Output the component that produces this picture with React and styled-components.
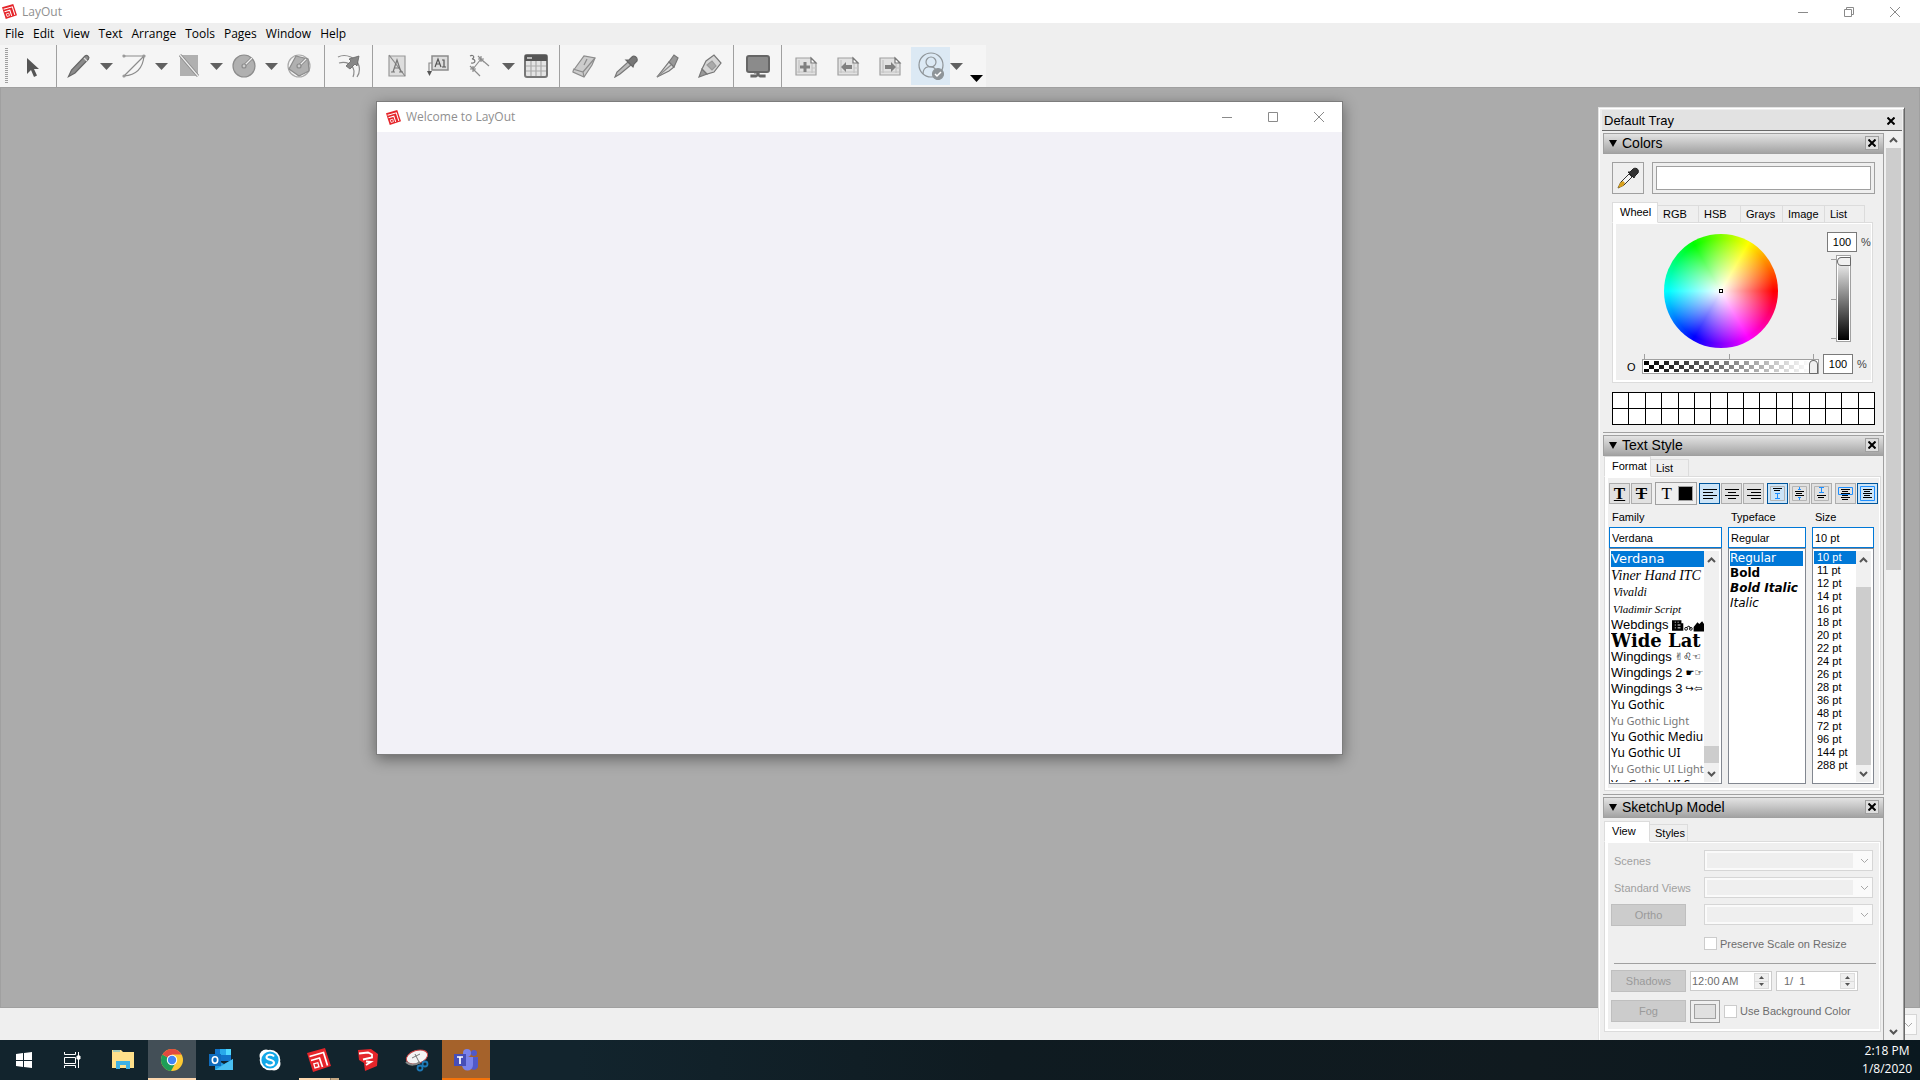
import React from "react";
import styled, { createGlobalStyle, css } from "styled-components";

const ui = `"Open Sans", "Noto Sans", sans-serif`;
const sans = `"Liberation Sans", Arial, sans-serif`;

const GlobalStyle = createGlobalStyle`
  *, *::before, *::after { box-sizing: border-box; }
  body { margin: 0; background: #ababab; overflow: hidden; }
  button, input, select { font: inherit; color: inherit; margin: 0; padding: 0; border: 0; border-radius: 0; background: none; outline: 0; }
  svg { display: block; flex: none; }
  ul { list-style: none; margin: 0; padding: 0; }
`;

/* ---------- application shell ---------- */

const Screen = styled.div`
  position: relative;
  display: flex;
  flex-direction: column;
  height: 100vh;
  font: 12px/16px ${ui};
  color: #000;
`;

const TitleBar = styled.header`
  display: flex;
  align-items: center;
  flex: none;
  height: ${(p) => p.$height}px;
  padding-left: ${(p) => p.$lead}px;
  padding-right: ${(p) => p.$trail}px;
  gap: 5px;
  background: #fff;
  color: #8f8f8f;
`;

const TitleText = styled.span`
  flex: 1;
`;

const WindowButton = styled.button`
  display: grid;
  place-items: center;
  width: 46px;
  height: 100%;
`;

const MenuBar = styled.nav`
  display: flex;
  flex: none;
  align-items: center;
  gap: 9px;
  height: 22px;
  padding-left: 5px;
  background: #efefef;
`;

const MenuItem = styled.button`
  line-height: 22px;
`;

const ToolStrip = styled.div`
  flex: none;
  display: flex;
  height: 43px;
  background: #efefef;
  border-bottom: 1px solid #a0a0a0;
`;

const Tools = styled.div`
  display: flex;
  padding-right: 3px;
  background: #f5f5f5;
`;

const Grip = styled.div`
  width: 3px;
  margin: 3px 1px 4px 5px;
  background: repeating-linear-gradient(#a0a0a0 0 1px, transparent 1px 2px);
`;

const ToolGroup = styled.div`
  display: flex;
  align-items: center;
  padding: 0 ${(p) => (p.$early ? 4 : 2)}px 0 ${(p) => (p.$early ? 1 : 3)}px;
  border-right: ${(p) => (p.$last ? 0 : "1px solid #a0a0a0")};
`;

const ToolButton = styled.button`
  display: grid;
  place-items: center;
  width: ${(p) => (p.$active ? 39 : 42)}px;
  height: 38px;
  background: ${(p) => (p.$active ? "#dce9f4" : "transparent")};
`;

const CaretButton = styled.button`
  display: grid;
  place-items: center;
  width: 13px;
  height: 38px;
`;

const OverflowButton = styled.button`
  align-self: flex-end;
  padding: 0 0 5px 5px;
`;

const Canvas = styled.main`
  flex: 1;
  background: #ababab;
  border: solid #a0a0a0;
  border-width: 0 1px 1px;
`;

const StatusBar = styled.footer`
  flex: none;
  display: flex;
  align-items: center;
  justify-content: flex-end;
  height: 32px;
  padding-right: 3px;
  background: #efefef;
`;

const Welcome = styled.section`
  position: absolute;
  left: 376px;
  top: 101px;
  width: 967px;
  height: 654px;
  background: #f2f1f7;
  border: 1px solid #7d7d7d;
  box-shadow: 0 4px 14px rgba(0, 0, 0, 0.42);
`;

/* ---------- tray ---------- */

const Tray = styled.aside`
  position: absolute;
  top: 107px;
  right: 15px;
  bottom: 40px;
  width: 307px;
  display: flex;
  flex-direction: column;
  padding: 2px 2px 0 3px;
  background: #efefef;
  border: 1px solid #e3e3e3;
  border-right-color: #696969;
  border-bottom: 0;
  box-shadow: inset 1px 1px #fff, inset -1px 0 #a0a0a0;
  font: 11px/14px ${sans};
  overflow: hidden;
`;

const TrayTitle = styled.header`
  display: flex;
  align-items: center;
  justify-content: space-between;
  flex: none;
  height: 21px;
  padding: 1px 7px 0 2px;
  background: #e2e2e2;
  border-bottom: 1px solid #696969;
  font-size: 13px;
`;

const TrayBody = styled.div`
  display: flex;
  flex: 1;
  gap: 2px;
  min-height: 0;
  padding: 0 1px;
`;

const Panels = styled.div`
  flex: 1;
  min-width: 0;
  display: flex;
  flex-direction: column;
  gap: 2px;
  padding-top: 2px;
`;

const PanelBox = styled.section`
  flex: none;
  border-right: 1px solid #a0a0a0;
  border-bottom: 1px solid #a0a0a0;
`;

const PanelHead = styled.header`
  display: flex;
  align-items: center;
  height: 21px;
  padding: 0 4px 1px 5px;
  gap: 5px;
  border: 1px solid #a0a0a0;
  border-right: 0;
  background: linear-gradient(#e3e3e3, #a3a3a3);
  font-size: 14px;
`;

const PanelTitle = styled.h2`
  flex: 1;
  margin: 0;
  font: inherit;
`;

const CloseBox = styled.button`
  display: grid;
  place-items: center;
  width: 14px;
  height: 14px;
  border: 1px solid #a0a0a0;
  background: #dedede;
`;

const CloseBoxPlain = styled.button`
  display: grid;
  place-items: center;
`;

const ScrollColumn = styled.div`
  display: flex;
  flex-direction: column;
  align-items: center;
  justify-content: space-between;
  flex: none;
  width: 15px;
  background: #f0f0f0;
`;

const ScrollArrow = styled.button`
  display: grid;
  place-items: center;
  flex: none;
  width: 15px;
  height: 17px;
`;

const ScrollTrack = styled.div`
  flex: 1;
  display: flex;
  flex-direction: column;
  width: 15px;
  padding-bottom: ${(p) => p.$rest || 0}px;
`;

const Thumb = styled.div`
  width: 15px;
  height: ${(p) => p.$size};
  margin-top: ${(p) => (p.$end ? "auto" : 0)};
  background: #cdcdcd;
`;

const Tabs = styled.div`
  display: flex;
  align-items: flex-end;
  height: 21px;
  margin-bottom: -1px;
`;

const Tab = styled.button`
  width: ${(p) => p.$w}px;
  height: 18px;
  text-align: left;
  padding-left: 5px;
  border: 1px solid #dcdcdc;
  border-left: 0;
  white-space: nowrap;
  ${(p) =>
    p.$on &&
    css`
      position: relative;
      height: 21px;
      padding: 0 0 2px 7px;
      border-left: 1px solid #dcdcdc;
      border-bottom-color: #fff;
      background: #fff;
    `}
`;

const TabPane = styled.div`
  border: 1px solid #dcdcdc;
  box-shadow: inset 3px 1px #fff, inset -1px -2px #fff;
`;

/* Colors */

const ColorsBody = styled.div`
  padding: 8px 8px 7px 9px;
`;

const SampleRow = styled.div`
  display: flex;
  gap: 8px;
  height: 32px;
  margin-bottom: 8px;
`;

const Dropper = styled.button`
  display: grid;
  place-items: center;
  width: 32px;
  border: 1px solid #a0a0a0;
`;

const Well = styled.button`
  flex: 1;
  padding: 3px;
  border: 1px solid #a0a0a0;
`;

const WellFill = styled.span`
  display: block;
  height: 100%;
  border: 1px solid #a0a0a0;
  background: ${(p) => p.$fill};
`;

const WheelPane = styled(TabPane)`
  height: 161px;
  margin-right: 2px;
  padding: 9px 0 0 14px;
`;

const WheelRow = styled.div`
  display: flex;
  height: 122px;
`;

const Wheel = styled.div`
  display: grid;
  place-items: center;
  width: 114px;
  height: 114px;
  margin: 2px 49px 0 37px;
  border-radius: 50%;
  background: radial-gradient(closest-side, #fff 0, rgba(255, 255, 255, 0.5) 45%, rgba(255, 255, 255, 0) 92%),
    conic-gradient(from 90deg, #f00, #f0f, #00f, #0ff, #0f0, #ff0, #f00);
`;

const Marker = styled.span`
  width: 4px;
  height: 4px;
  border: 1px solid #000;
  background: #fff;
`;

const Amount = styled.label`
  display: flex;
  align-items: center;
  gap: 4px;
  height: 20px;
  color: #444;
`;

const AmountInput = styled.input`
  width: 30px;
  height: 20px;
  border: 1px solid #7a7a7a;
  background: #fff;
  color: #000;
  text-align: center;
`;

const Value = styled.div`
  display: flex;
  flex-direction: column;
  gap: 3px;
`;

const ValueSlider = styled.div`
  display: flex;
  padding-left: 4px;
`;

const ValueTicks = styled.div`
  width: 5px;
  height: 80px;
  margin-top: 4px;
  background: linear-gradient(#a0a0a0, #a0a0a0) 0 0 / 5px 1px no-repeat,
    linear-gradient(#a0a0a0, #a0a0a0) 0 50% / 5px 1px no-repeat,
    linear-gradient(#a0a0a0, #a0a0a0) 0 100% / 5px 1px no-repeat;
`;

const VRange = styled.input`
  appearance: none;
  writing-mode: vertical-lr;
  direction: rtl;
  width: 15px;
  height: 87px;
  border: 1px solid #a0a0a0;
  background: linear-gradient(#fff, #000) content-box, #fff;
  padding: 1px;
  &::-webkit-slider-thumb {
    appearance: none;
    width: 14px;
    height: 9px;
    border: 1px solid #696969;
    border-radius: 5px 1px 1px 5px;
    background: #f0f0f0;
  }
`;

const OpacityRow = styled.div`
  display: flex;
  align-items: flex-end;
  gap: 4px;
`;

const OpacityLabel = styled.label`
  width: 11px;
`;

const OpacitySlider = styled.div`
  width: 177px;
`;

const OpacityTicks = styled.div`
  height: 5px;
  margin: 0 5px 0 2px;
  background: linear-gradient(#a0a0a0, #a0a0a0) 0 0 / 1px 5px no-repeat,
    linear-gradient(#a0a0a0, #a0a0a0) 50% 0 / 1px 5px no-repeat,
    linear-gradient(#a0a0a0, #a0a0a0) 100% 0 / 1px 5px no-repeat;
`;

const HRange = styled.input`
  appearance: none;
  display: block;
  width: 100%;
  height: 15px;
  border: 1px solid #a0a0a0;
  padding: 1px 0 1px 1px;
  background: linear-gradient(90deg, rgba(255, 255, 255, 0), #fff 96%) content-box,
    repeating-conic-gradient(#fff 0 25%, #000 0 50%) 0 0 / 10px 8px content-box, #fff;
  &::-webkit-slider-thumb {
    appearance: none;
    width: 9px;
    height: 14px;
    border: 1px solid #696969;
    border-radius: 5px 5px 1px 1px;
    background: #f0f0f0;
  }
`;

const SwatchGrid = styled.div`
  display: grid;
  grid-template-columns: repeat(16, 1fr);
  grid-auto-rows: 15px;
  gap: 1px;
  margin-top: 9px;
  border: 1px solid #000;
  background: #000;
`;

const Swatch = styled.button`
  background: #fff;
`;

/* Text style */

const StyleBody = styled.div`
  padding: 0 2px 3px 1px;
`;

const FormatPane = styled(TabPane)`
  padding: 5px 1px 6px 4px;
`;

const FormatBar = styled.div`
  display: flex;
  align-items: center;
  gap: 2px;
  height: 23px;
`;

const FormatGroup = styled.div`
  display: flex;
  gap: 1px;
  padding-right: 1px;
  &:last-child { padding-right: 0; }
`;

const FormatButton = styled.button`
  display: grid;
  place-items: center;
  width: 21px;
  height: 21px;
  border: 1px solid ${(p) => (p.$on ? "#00559b" : "#adadad")};
  background: ${(p) => (p.$on ? "#cce4f7" : "#e1e1e1")};
`;

const Glyph = styled.span`
  font: ${(p) => (p.$plain ? 400 : 700)} 17px/16px "Liberation Serif", serif;
  text-decoration: ${(p) => p.$line || "none"};
`;

const TextColor = styled.button`
  display: flex;
  align-items: center;
  justify-content: flex-end;
  gap: 6px;
  width: 42px;
  height: 23px;
  padding-right: 3px;
  border: 1px solid #a0a0a0;
`;

const Chip = styled.span`
  width: 15px;
  height: 15px;
  border: 1px solid #a0a0a0;
  background: #000;
`;

const PickerRow = styled.div`
  display: flex;
  gap: 6px;
  padding-top: 5px;
`;

const Picker = styled.div`
  display: flex;
  flex-direction: column;
  width: ${(p) => p.$w}px;
`;

const PickerLabel = styled.label`
  height: 17px;
  padding-left: 3px;
`;

const PickerInput = styled.input`
  width: 100%;
  height: 21px;
  padding: 0 2px;
  border: 1px solid #0078d7;
  background: #fff;
`;

const ListBox = styled.div`
  display: flex;
  height: 236px;
  padding: 2px 2px 1px 1px;
  border: 1px solid #828790;
  background: #fff;
`;

const Options = styled.ul`
  flex: 1;
  min-width: 0;
  overflow: hidden;
`;

const Option = styled.li`
  display: flex;
  align-items: center;
  gap: 3px;
  height: ${(p) => p.$h}px;
  line-height: ${(p) => p.$h}px;
  padding-left: ${(p) => p.$indent || 0}px;
  white-space: nowrap;
  font-family: ${(p) => p.$face || sans};
  font-size: ${(p) => p.$size || 11}px;
  font-weight: ${(p) => (p.$bold ? 700 : 400)};
  font-style: ${(p) => (p.$italic ? "italic" : "normal")};
  color: ${(p) => (p.$on ? "#fff" : p.$dim ? "#777" : "#000")};
  background: ${(p) => (p.$on ? "#0078d7" : "transparent")};
`;

const Symbols = styled.span`
  font: 10px/16px "DejaVu Sans", sans-serif;
`;

/* SketchUp model */

const ModelBody = styled.div`
  padding: 3px 2px 8px 1px;
`;

const ModelPane = styled(TabPane)`
  height: 191px;
  padding: 8px 7px 0 6px;
  color: #a0a0a0;
`;

const ModelRow = styled.div`
  display: flex;
  align-items: center;
  height: 21px;
  margin-bottom: 6px;
`;

const ModelKey = styled.div`
  flex: 1;
  label { padding-left: 3px; }
`;

const FlatButton = styled.button`
  width: 75px;
  height: 22px;
  border: 1px solid #bfbfbf;
  background: #cccccc;
  color: #9a9a9a;
`;

const ComboWrap = styled.div`
  position: relative;
  width: ${(p) => p.$w}px;
  height: 21px;
`;

const Combo = styled.select`
  appearance: none;
  width: 100%;
  height: 21px;
  border: 1px solid #cccccc;
  background: linear-gradient(#efefef, #efefef) 2px 2px / calc(100% - 21px) 15px no-repeat #fff;
`;

const ComboArrow = styled.span`
  position: absolute;
  right: 4px;
  top: 8px;
  pointer-events: none;
`;

const CheckLabel = styled.label`
  display: flex;
  align-items: center;
  gap: 3px;
  height: 25px;
  padding-left: ${(p) => p.$indent || 0}px;
  color: #6d6d6d;
`;

const Check = styled.input`
  appearance: none;
  width: 13px;
  height: 13px;
  border: 1px solid #cccccc;
  background: #fff;
`;

const Rule = styled.hr`
  height: 1px;
  margin: 7px -3px 6px 3px;
  border: 0;
  background: #a0a0a0;
`;

const ControlRow = styled.div`
  display: flex;
  align-items: center;
  gap: 4px;
  height: 22px;
  margin-bottom: 8px;
`;

const Spin = styled.div`
  display: flex;
  width: 82px;
  height: 20px;
  padding: 1px 2px 1px 1px;
  border: 1px solid #cccccc;
  background: #fff;
`;

const SpinInput = styled.input`
  flex: 1;
  min-width: 0;
  padding-left: ${(p) => p.$indent || 0}px;
  color: #6d6d6d;
  white-space: pre;
`;

const SpinButtons = styled.div`
  display: grid;
  width: 15px;
  background: #efefef;
  border: 1px solid #dcdcdc;
`;

const SpinButton = styled.button`
  display: grid;
  place-items: center;
  & + & { border-top: 1px solid #dcdcdc; }
`;

const FogColor = styled.button`
  width: 30px;
  height: 23px;
  padding: 3px;
  border: 1px solid #a0a0a0;
`;

/* ---------- task bar ---------- */

const TaskBar = styled.footer`
  flex: none;
  display: flex;
  justify-content: space-between;
  height: 40px;
  background: linear-gradient(90deg, #12242d 0%, #12242d 30%, #0f1b21 52%, #101a1f 80%, #0a181f 100%);
`;

const TaskButtons = styled.div`
  display: flex;
  gap: 1px;
`;

const SystemButtons = styled.div`
  display: flex;
  padding-right: 2px;
`;

const TaskButton = styled.button`
  display: grid;
  place-items: center;
  width: 48px;
  height: 40px;
  background: ${(p) => p.$bg || "transparent"};
  box-shadow: ${(p) => (p.$bar ? `inset 0 -2px ${p.$bar}` : "none")};
`;

const RunningMark = styled(TaskButton)`
  background: linear-gradient(90deg, #fcd7ae 31px, #8c7a62 31px 32px, #c4a883 32px) 50% 100% / 40px 2px no-repeat;
`;

const Clock = styled.time`
  display: flex;
  flex-direction: column;
  align-items: center;
  justify-content: center;
  gap: 2px;
  padding: 0 8px 0 0;
  color: #fff;
`;

/* ---------- drawings ---------- */

const LayoutLogo = ({ s = 15 }) => (
  <svg width={s} height={s} viewBox="0 0 24 24">
    <path d="M0 5 18 0l6 18L6 24z" fill="#e5252a" />
    <path d="M2.500 8.500 16.500 4.500 20.500 17.500M4 12.500l8.500-2.500 3 9" fill="none" stroke="#fff" strokeWidth="1.700" />
    <path d="M6.800 15.800l4-1.100 1.200 4-4 1.200z" fill="none" stroke="#fff" strokeWidth="1.300" />
  </svg>
);

const Line = ({ d, w = 10, h = 10, c = "#8a8a8a", sw = 1 }) => (
  <svg width={w} height={h} viewBox={`0 0 ${w} ${h}`}>
    <path d={d} fill="none" stroke={c} strokeWidth={sw} />
  </svg>
);

const MinIcon = () => <Line d="M0 5.500h10" />;
const MaxIcon = () => <Line d="M.5.5h9v9h-9z" />;
const RestoreIcon = () => <Line d="M.5 2.500h7v7h-7zM2.500 2.500v-2h7v7h-2" />;
const XIcon = () => <Line d="M0 0l10 10M10 0L0 10" />;
const BoldX = ({ s = 8 }) => <Line w={s} h={s} d={`M.5.5l${s - 1} ${s - 1}M${s - 0.5}.5L.5 ${s - 0.5}`} c="#000" sw={2} />;

const Caret = ({ c = "#606060" }) => (
  <svg width="13" height="7" viewBox="0 0 13 7"><path d="M0 0h13L6.500 7z" fill={c} /></svg>
);

const Chevron = ({ up, c = "#555", sw = 2 }) => (
  <Line w={9} h={6} d={up ? "M1 5l3.500-3.500L8 5" : "M1 1l3.500 3.500L8 1"} c={c} sw={sw} />
);

const Tri = () => (
  <svg width="8" height="7" viewBox="0 0 8 7"><path d="M0 0h8L4 7z" /></svg>
);

const S = ({ children, f = "none", st = "#8c8c8c" }) => (
  <svg width="24" height="24" viewBox="0 0 24 24" fill={f} stroke={st} strokeWidth="1.200">{children}</svg>
);

const PageBase = ({ children }) => (
  <S>
    <path d="M2 4h15l5 5v12H2z" fill="#e2e2e2" stroke="#a0a0a0" />
    <path d="M5 6v13M3 18h18M18 10v9M18 14h4" stroke="#c4c4c4" />
    <path d="M17 4l5 5h-5z" fill="#fff" stroke="#777" />
    {children}
  </S>
);

const icons = {
  select: <S st="none"><path d="M8 4v16l4-4 3 7 3-1.500-3-6.500h5z" fill="#555" /></S>,
  pencil: <S><path d="M1.500 22.500l3-6.500L18 2c2-1.500 5 1 3.500 3L8 19z" fill="#8b8b8b" stroke="#666" /><path d="M17 4l3 3" stroke="#ddd" /></S>,
  arc: <S><path d="M2 2h20L2 22M22 2c-1 11-7 19-20 20" /><g fill="#999" stroke="#999"><circle cx="2" cy="2" r="1" /><circle cx="22" cy="2" r="1" /><circle cx="2" cy="22" r="1" /></g></S>,
  rect: <S><path d="M3 1h18v21H3z" fill="#b0b0b0" stroke="none" /><path d="M3 1l18 21" stroke="#8c8c8c" strokeWidth="3" /><path d="M3 1l18 21" stroke="#eee" /></S>,
  circle: <S><circle cx="12" cy="12" r="11" fill="#b0b0b0" /><path d="M12 12l8-8" stroke="#888" strokeWidth="3" /><path d="M12 12l8-8" stroke="#eee" /><circle cx="12" cy="12" r="2" fill="#ccc" /></S>,
  polygon: <S><circle cx="12" cy="12" r="11" stroke="#aaa" /><path d="M9 2l12 3 1 12-10 5L2 15z" fill="#b0b0b0" /><path d="M12 12l7-7" stroke="#888" strokeWidth="3" /><path d="M12 12l7-7" stroke="#eee" /><circle cx="12" cy="12" r="2" fill="#ccc" /></S>,
  offset: <S><path d="M1 3c8-4 19 1 21 9 1 4 0 8-2 11M2 9c7-2 14 1 15 8 0 2 0 4-1 6" /><path d="M9 12l5-5-2-2 10-3-2 10-2-2-5 5z" fill="#888" stroke="#666" strokeWidth=".8" /></S>,
  text: <S><path d="M4 2h16v20H4z" fill="#ddd" stroke="#999" /><path d="M4 1l16 21" stroke="#888" /><path d="M8 18l4-12 4 12M9 14h6M6 18h4M14 18h4" stroke="#777" /></S>,
  label: <S><path d="M5 2h16v14H5z" fill="#ddd" strokeWidth="1.500" /><path d="M8 13l3-8 3 8M9 10h4M15 6h2v7M15 13h4" stroke="#555" /><path d="M5 9H2v9" /><path d="M0 17h5l-2.500 5z" fill="#555" stroke="none" /></S>,
  dimension: <S><path d="M4 15L12 5l8 7M4 15l7 7M1 12l6 6M9 2l6 6M1 15h6M4 12v6M9 5h6M12 2v6" /><path d="M1 2c4-2 5 2 2 3 4 0 4 5-1 4" stroke="#777" /></S>,
  table: <S><rect x="1" y="1" width="22" height="22" rx="2" fill="#e4e4e4" stroke="#777" strokeWidth="2" /><path d="M1 1h22v6H1z" fill="#555" stroke="none" /><path d="M3 4h5" stroke="#fff" /><path d="M7 7v15M12 7v15M17 7v15M2 12h20M2 17h20" stroke="#aaa" /></S>,
  eraser: <S><path d="M1 17L12 2l11 2-3 7-8 12-11-5z" fill="#ccc" /><path d="M1 15l10 3L23 4M11 18l1 5M12 11l3-6" /></S>,
  dropper: <S><path d="M1 23l2-5L14 8l3 3L6 20z" fill="#bbb" stroke="#777" /><path d="M12 6l7 7 1-3 3-3c1-4-3-6-5-4l-3 3z" fill="#777" stroke="#666" /></S>,
  knife: <S><path d="M1 23L13 8l5 5-5 4z" fill="#dcdcdc" stroke="#777" /><path d="M13 8l5-7 4 3-4 9z" fill="#999" stroke="#777" /><path d="M1 23l14-12" /></S>,
  glue: <S><path d="M1 23l3-8 5 5z" fill="#999" stroke="#777" /><path d="M4 15L8 7l8-6 7 8-7 9-7 2z" fill="#d6d6d6" stroke="#777" /><path d="M9 11l5-4 4 5-4 4z" fill="#aaa" stroke="#999" /></S>,
  screen: <S><rect x="1" y="2" width="22" height="16" rx="2" fill="#8b8b8b" stroke="#666" strokeWidth="2" /><path d="M8 19h3v2H5v2h5l1-1h2l1 1h5v-2h-6v-2" fill="#666" stroke="#666" /></S>,
  add: <PageBase><path d="M6 13h10M11 8v10" stroke="#808080" strokeWidth="3" /></PageBase>,
  prev: <PageBase><path d="M5 13l5-5v3h6v4h-6v3z" fill="#808080" stroke="none" /></PageBase>,
  next: <PageBase><path d="M18 13l-5-5v3H7v4h6v3z" fill="#808080" stroke="none" /></PageBase>,
  person: (
    <svg width="28" height="28" viewBox="0 0 28 28" fill="none" stroke="#8f9599" strokeWidth="1.200">
      <circle cx="14" cy="13" r="12" /><circle cx="14" cy="10" r="5" /><path d="M6 22c0-9 10-9 13-4" />
      <circle cx="21" cy="22" r="5.500" fill="#8f9599" /><path d="M18 22l2 2 4-4" stroke="#fff" strokeWidth="1.500" />
    </svg>
  ),
};

const ColorDropper = () => (
  <svg width="24" height="24" viewBox="0 0 24 24">
    <path d="M2 22l3-6 8-8 3 3-8 8z" fill="#f5f5f5" stroke="#333" />
    <path d="M2 22l2-5 3-2 2 2-2 3z" fill="#d9a11c" />
    <path d="M12 6l6 6 1-2 3-3c2-4-3-6-5-4l-3 3z" fill="#333" stroke="#222" />
  </svg>
);

const Lines = ({ mode }) => {
  const x = { left: [0, 0, 0, 0], center: [0, 3, 0, 3], right: [0, 4, 0, 4] }[mode];
  const w = [14, mode === "center" ? 8 : 10, 14, mode === "center" ? 8 : 10];
  return (
    <svg width="14" height="10" viewBox="0 0 14 10">
      {x.map((v, i) => <rect key={i} x={v} y={i * 3} width={w[i]} height="1" />)}
    </svg>
  );
};

const Anchor = ({ mode }) => {
  const b = "#1e8fff";
  const text = (y, n = 3) => Array.from({ length: n }, (_, i) => <path key={i} d={`M${i % 2 ? 4 : 3} ${y + i * 2 + 0.5}h${i % 2 ? 6 : 9}`} stroke="#000" />);
  const frame = <path d="M.5.5h14v14H.500z" stroke="#b5b5b5" />;
  return (
    <svg width="15" height="15" viewBox="0 0 15 15" fill="none">
      {mode === "top" && <>{frame}{text(2, 2)}<path d="M7.500 7v6M5 7.500h5M5 12.500h5" stroke={b} /></>}
      {mode === "middle" && <>{frame}{text(5)}<path d="M7.500 1v3M7.500 11v3M6 3.500h3M6 11.500h3" stroke={b} /></>}
      {mode === "bottom" && <>{frame}{text(9, 2)}<path d="M7.500 1v6M5 1.500h5M5 6.500h5" stroke={b} /></>}
      {mode === "open" && <><path d="M.5 1.500h14v7H.500z" stroke={b} />{text(3, 6)}</>}
      {mode === "bound" && <><path d="M.5.5h14v14H.500z" stroke={b} />{text(3, 5)}</>}
    </svg>
  );
};

const Webdings = () => (
  <svg width="32" height="13" viewBox="0 0 34 13">
    <path d="M0 12V1h10v3h2v8z" /><path d="M3 3h1M6 3h1M3 6h1M6 6h3M3 9h1M6 9h3" stroke="#fff" />
    <circle cx="15" cy="10" r="1.500" fill="none" stroke="#000" /><circle cx="20" cy="10" r="1.500" fill="none" stroke="#000" /><path d="M15 9l3-2 2 3" fill="none" stroke="#000" />
    <path d="M23 13V8l4-5 2 2 3-3 2 3v8z" />
  </svg>
);

const taskIcons = {
  start: <svg width="16" height="16" viewBox="0 0 16 16" fill="#fff"><path d="M0 2l7-1v7H0zM8 1l8-1v8H8zM0 9h7v6l-7-1zM8 9h8v7l-8-1z" /></svg>,
  view: <svg width="17" height="16" viewBox="0 0 17 16" fill="none" stroke="#fff"><path d="M.5 0v2.500h11V0M.5 5.500h11v6H.500zM.5 16v-2.500h11V16M14.500 0v16" /><path d="M13 4h3v3h-3z" fill="#fff" /></svg>,
  files: <svg width="22" height="20" viewBox="0 0 22 20"><path d="M0 0h9l2 2h11v16H0z" fill="#ffe08a" /><path d="M1 1h7" stroke="#46b5e8" /><path d="M4 19v-8h14v8h-4v-4H8v4z" fill="#3db1e5" /></svg>,
  chrome: <svg width="22" height="22" viewBox="0 0 22 22"><circle cx="11" cy="11" r="11" fill="#fcc934" /><path d="M11 11L1.500 5.500A11 11 0 0 0 10 22l5-9z" fill="#1e9e58" /><path d="M11 11L1.500 5.500a11 11 0 0 1 19 0H11z" fill="#e24a3f" /><circle cx="11" cy="11" r="5.200" fill="#fff" /><circle cx="11" cy="11" r="4.200" fill="#4285f4" /></svg>,
  outlook: <svg width="24" height="22" viewBox="0 0 24 22"><path d="M6 0h16v12H6z" fill="#1173c9" /><path d="M11 0h6v6h-6z" fill="#28a8ea" /><path d="M17 0h5v6h-5z" fill="#50d9ff" /><path d="M6 10l9 5 9-5v11H6z" fill="#1f9ce0" /><path d="M6 21l18-11v11z" fill="#4ac0f2" /><path d="M0 5h12v12H0z" fill="#0f6cbd" /><ellipse cx="6" cy="11" rx="2.700" ry="3.200" fill="none" stroke="#fff" strokeWidth="1.600" /></svg>,
  skype: <svg width="22" height="22" viewBox="0 0 22 22"><circle cx="7" cy="7" r="6.500" fill="#fff" /><circle cx="15" cy="15" r="6.500" fill="#fff" /><circle cx="11" cy="11" r="10.300" fill="#fff" /><circle cx="11" cy="11" r="8.600" fill="#13a8e8" /><path d="M15 7.500c-2-3-8-2-7.500 1 .5 3 7 1.500 7.500 5 .3 3.500-6.500 4-8 .8" fill="none" stroke="#fff" strokeWidth="2" /></svg>,
  sketchup: <svg width="22" height="22" viewBox="0 0 22 22"><path d="M1 1l13-1 7 5-1 12L8 22 7 14 2 11z" fill="#e5252a" /><path d="M2 4.500l9-1 4 2v3L6 10.500M9 12.500l5 .5-5 3" fill="none" stroke="#fff" strokeWidth="1.800" /></svg>,
  snip: <svg width="24" height="24" viewBox="0 0 24 24"><ellipse cx="12" cy="9" rx="11" ry="6.500" transform="rotate(-18 12 9)" fill="#f4f4f4" stroke="#c44" /><path d="M1 14c4 4 10 3 14 0" stroke="#888" strokeWidth="2" fill="none" /><path d="M7 10l8-4M10 6l5 10" stroke="#777" /><g fill="none" stroke="#1d7ab8" strokeWidth="1.800"><circle cx="15" cy="20" r="2.500" /><circle cx="20" cy="16" r="2.500" /></g></svg>,
  teams: <svg width="24" height="22" viewBox="0 0 24 22"><circle cx="20" cy="4" r="3" fill="#5059c9" /><path d="M16 8h8v7a4 4 0 0 1-8 3z" fill="#5059c9" /><circle cx="13" cy="4" r="4" fill="#7b83eb" /><path d="M8 8h11v8a5.500 5.500 0 0 1-11 0z" fill="#7b83eb" /><path d="M0 5h12v12H0z" fill="#464eb8" /><path d="M3 8h6M6 8v7" stroke="#fff" strokeWidth="1.700" /></svg>,
};

/* ---------- composed parts ---------- */

const Tool = ({ name, drop, active }) => (
  <>
    <ToolButton type="button" aria-label={name} $active={active}>{icons[name]}</ToolButton>
    {drop && <CaretButton type="button" aria-label={`${name} options`}><Caret /></CaretButton>}
  </>
);

const Controls = ({ restore }) => (
  <>
    <WindowButton type="button" aria-label="Minimize"><MinIcon /></WindowButton>
    <WindowButton type="button" aria-label="Maximize">{restore ? <RestoreIcon /> : <MaxIcon />}</WindowButton>
    <WindowButton type="button" aria-label="Close"><XIcon /></WindowButton>
  </>
);

const ControlBox = styled.div`
  display: flex;
  height: 100%;
`;

const Panel = ({ title, children }) => (
  <PanelBox>
    <PanelHead>
      <Tri />
      <PanelTitle>{title}</PanelTitle>
      <CloseBox type="button" aria-label={`Close ${title}`}><BoldX /></CloseBox>
    </PanelHead>
    {children}
  </PanelBox>
);

const Scroll = ({ size, end, rest }) => (
  <ScrollColumn>
    <ScrollArrow type="button" aria-label="Scroll up"><Chevron up /></ScrollArrow>
    <ScrollTrack $rest={rest}><Thumb $size={size} $end={end} /></ScrollTrack>
    <ScrollArrow type="button" aria-label="Scroll down"><Chevron /></ScrollArrow>
  </ScrollColumn>
);

const TabRow = ({ items }) => (
  <Tabs role="tablist">
    {items.map(([t, w], i) => (
      <Tab key={t} type="button" role="tab" aria-selected={i === 0} $on={i === 0} $w={w}>{t}</Tab>
    ))}
  </Tabs>
);

const DisabledCombo = ({ id, w = 169, label }) => (
  <ComboWrap $w={w}>
    <Combo id={id} aria-label={label} disabled />
    <ComboArrow><Chevron c="#a8a8a8" sw={1} /></ComboArrow>
  </ComboWrap>
);

const Stepper = ({ label, value, indent }) => (
  <Spin>
    <SpinInput aria-label={label} defaultValue={value} $indent={indent} />
    <SpinButtons>
      <SpinButton type="button" aria-label={`${label} up`}><svg width="5" height="3"><path d="M0 3h5L2.500 0z" fill="#555" /></svg></SpinButton>
      <SpinButton type="button" aria-label={`${label} down`}><svg width="5" height="3"><path d="M0 0h5L2.500 3z" fill="#555" /></svg></SpinButton>
    </SpinButtons>
  </Spin>
);

const dejavu = `"DejaVu Sans", Verdana, sans-serif`;
const script = `"Liberation Serif", serif`;
const noto = `"Noto Sans", sans-serif`;

const families = [
  { t: "Verdana", h: 16, face: dejavu, size: 13, on: true },
  { t: "Viner Hand ITC", h: 17, face: script, size: 14, italic: true },
  { t: "Vivaldi", h: 17, face: script, size: 12, italic: true, indent: 2 },
  { t: "Vladimir Script", face: script, size: 11, italic: true, indent: 2 },
  { t: "Webdings", size: 13, extra: <Webdings /> },
  { t: "Wide Lat", size: 18, face: `"DejaVu Serif", serif`, bold: true },
  { t: "Wingdings", size: 13, extra: <Symbols>✌♌☜</Symbols> },
  { t: "Wingdings 2", size: 13, extra: <Symbols>☛☞</Symbols> },
  { t: "Wingdings 3", size: 13, extra: <Symbols>↪⇦</Symbols> },
  { t: "Yu Gothic", size: 12, face: noto },
  { t: "Yu Gothic Light", size: 11, face: noto, dim: true },
  { t: "Yu Gothic Mediu", size: 12, face: noto },
  { t: "Yu Gothic UI", size: 12, face: noto },
  { t: "Yu Gothic UI Light", size: 11, face: noto, dim: true },
  { t: "Yu Gothic UI S", size: 12, face: noto },
];

const faces = [
  { t: "Regular", on: true },
  { t: "Bold", bold: true },
  { t: "Bold Italic", bold: true, italic: true },
  { t: "Italic", italic: true },
];

const sizes = [10, 11, 12, 14, 16, 18, 20, 22, 24, 26, 28, 36, 48, 72, 96, 144, 288];

const Choice = ({ o, h = 16 }) => (
  <Option role="option" aria-selected={!!o.on} $h={o.h || h} $face={o.face} $size={o.size} $on={o.on}
    $bold={o.bold} $italic={o.italic} $dim={o.dim} $indent={o.indent}>
    {o.t}{o.extra}
  </Option>
);

const ColorsPanel = () => (
  <Panel title="Colors">
    <ColorsBody>
      <SampleRow>
        <Dropper type="button" aria-label="Sample color"><ColorDropper /></Dropper>
        <Well type="button" aria-label="Active color"><WellFill $fill="#fff" /></Well>
      </SampleRow>
      <TabRow items={[["Wheel", 46], ["RGB", 41], ["HSB", 42], ["Grays", 42], ["Image", 42], ["List", 40]]} />
      <WheelPane>
        <WheelRow>
          <Wheel><Marker /></Wheel>
          <Value>
            <Amount><AmountInput defaultValue="100" />%</Amount>
            <ValueSlider>
              <ValueTicks />
              <VRange type="range" defaultValue="100" aria-label="Brightness" />
            </ValueSlider>
          </Value>
        </WheelRow>
        <OpacityRow>
          <OpacityLabel htmlFor="opacity">O</OpacityLabel>
          <OpacitySlider>
            <OpacityTicks />
            <HRange id="opacity" type="range" defaultValue="100" />
          </OpacitySlider>
          <Amount><AmountInput defaultValue="100" />%</Amount>
        </OpacityRow>
      </WheelPane>
      <SwatchGrid>
        {Array.from({ length: 32 }, (_, i) => <Swatch key={i} type="button" aria-label={`Swatch ${i + 1}`} />)}
      </SwatchGrid>
    </ColorsBody>
  </Panel>
);

const TextStylePanel = () => (
  <Panel title="Text Style">
    <StyleBody>
      <TabRow items={[["Format", 47], ["List", 38]]} />
      <FormatPane>
        <FormatBar>
          <FormatGroup>
            <FormatButton type="button" aria-label="Underline"><Glyph $line="underline">T</Glyph></FormatButton>
            <FormatButton type="button" aria-label="Strikethrough"><Glyph $line="line-through">T</Glyph></FormatButton>
          </FormatGroup>
          <TextColor type="button" aria-label="Text color"><Glyph $plain>T</Glyph><Chip /></TextColor>
          <FormatGroup>
            {["left", "center", "right"].map((m) => (
              <FormatButton key={m} type="button" aria-label={`Align ${m}`} $on={m === "left"}><Lines mode={m} /></FormatButton>
            ))}
          </FormatGroup>
          <FormatGroup>
            {["top", "middle", "bottom"].map((m) => (
              <FormatButton key={m} type="button" aria-label={`Anchor ${m}`} $on={m === "top"}><Anchor mode={m} /></FormatButton>
            ))}
          </FormatGroup>
          <FormatGroup>
            {["open", "bound"].map((m) => (
              <FormatButton key={m} type="button" aria-label={`Text box ${m}`} $on={m === "bound"}><Anchor mode={m} /></FormatButton>
            ))}
          </FormatGroup>
        </FormatBar>
        <PickerRow>
          <Picker $w={113}>
            <PickerLabel htmlFor="family">Family</PickerLabel>
            <PickerInput id="family" defaultValue="Verdana" />
            <ListBox>
              <Options role="listbox" aria-label="Family">{families.map((o) => <Choice key={o.t} o={o} />)}</Options>
              <Scroll size="17px" end rest={2} />
            </ListBox>
          </Picker>
          <Picker $w={78}>
            <PickerLabel htmlFor="typeface">Typeface</PickerLabel>
            <PickerInput id="typeface" defaultValue="Regular" />
            <ListBox>
              <Options role="listbox" aria-label="Typeface">
                {faces.map((o) => <Choice key={o.t} h={15} o={{ ...o, face: dejavu, size: 12 }} />)}
              </Options>
            </ListBox>
          </Picker>
          <Picker $w={62}>
            <PickerLabel htmlFor="size">Size</PickerLabel>
            <PickerInput id="size" defaultValue="10 pt" />
            <ListBox>
              <Options role="listbox" aria-label="Size">
                {sizes.map((n) => <Choice key={n} h={13} o={{ t: `${n} pt`, on: n === 10, indent: 3 }} />)}
              </Options>
              <Scroll size="178px" end />
            </ListBox>
          </Picker>
        </PickerRow>
      </FormatPane>
    </StyleBody>
  </Panel>
);

const ModelPanel = () => (
  <Panel title="SketchUp Model">
    <ModelBody>
      <TabRow items={[["View", 46], ["Styles", 38]]} />
      <ModelPane>
        <ModelRow><ModelKey><label htmlFor="scenes">Scenes</label></ModelKey><DisabledCombo id="scenes" /></ModelRow>
        <ModelRow><ModelKey><label htmlFor="views">Standard Views</label></ModelKey><DisabledCombo id="views" /></ModelRow>
        <ModelRow><ModelKey><FlatButton type="button">Ortho</FlatButton></ModelKey><DisabledCombo label="Scale" /></ModelRow>
        <CheckLabel $indent={93}><Check type="checkbox" />Preserve Scale on Resize</CheckLabel>
        <Rule />
        <ControlRow>
          <FlatButton type="button">Shadows</FlatButton>
          <Stepper label="Time" value="12:00 AM" />
          <Stepper label="Date" value="1/  1" indent={6} />
        </ControlRow>
        <ControlRow>
          <FlatButton type="button">Fog</FlatButton>
          <FogColor type="button" aria-label="Fog color"><WellFill $fill="#e0e0e0" /></FogColor>
          <CheckLabel><Check type="checkbox" />Use Background Color</CheckLabel>
        </ControlRow>
      </ModelPane>
    </ModelBody>
  </Panel>
);

export default function App() {
  return (
    <Screen>
      <GlobalStyle />
      <TitleBar $height={23} $lead={2} $trail={2}>
        <LayoutLogo />
        <TitleText>LayOut</TitleText>
        <ControlBox><Controls restore /></ControlBox>
      </TitleBar>
      <MenuBar>
        {["File", "Edit", "View", "Text", "Arrange", "Tools", "Pages", "Window", "Help"].map((m) => (
          <MenuItem key={m} type="button">{m}</MenuItem>
        ))}
      </MenuBar>
      <ToolStrip>
        <Tools>
          <Grip />
          <ToolGroup $early><Tool name="select" /></ToolGroup>
          <ToolGroup $early>
            <Tool name="pencil" drop /><Tool name="arc" drop /><Tool name="rect" drop /><Tool name="circle" drop /><Tool name="polygon" />
          </ToolGroup>
          <ToolGroup><Tool name="offset" /></ToolGroup>
          <ToolGroup><Tool name="text" /><Tool name="label" /><Tool name="dimension" drop /><Tool name="table" /></ToolGroup>
          <ToolGroup><Tool name="eraser" /><Tool name="dropper" /><Tool name="knife" /><Tool name="glue" /></ToolGroup>
          <ToolGroup><Tool name="screen" /></ToolGroup>
          <ToolGroup $last><Tool name="add" /><Tool name="prev" /><Tool name="next" /><Tool name="person" drop active /></ToolGroup>
          <OverflowButton type="button" aria-label="More tools"><Caret c="#000" /></OverflowButton>
        </Tools>
      </ToolStrip>
      <Canvas />
      <StatusBar><DisabledCombo w={90} label="Zoom" /></StatusBar>
      <TaskBar>
        <TaskButtons>
          <SystemButtons>
            <TaskButton type="button" aria-label="Start">{taskIcons.start}</TaskButton>
            <TaskButton type="button" aria-label="Task view">{taskIcons.view}</TaskButton>
          </SystemButtons>
          <TaskButton type="button" aria-label="File Explorer">{taskIcons.files}</TaskButton>
          <TaskButton type="button" aria-label="Chrome" $bg="#434f57" $bar="#fcd7ae">{taskIcons.chrome}</TaskButton>
          <TaskButton type="button" aria-label="Outlook">{taskIcons.outlook}</TaskButton>
          <TaskButton type="button" aria-label="Skype">{taskIcons.skype}</TaskButton>
          <RunningMark type="button" aria-label="LayOut"><LayoutLogo s={24} /></RunningMark>
          <TaskButton type="button" aria-label="SketchUp">{taskIcons.sketchup}</TaskButton>
          <TaskButton type="button" aria-label="Snipping Tool">{taskIcons.snip}</TaskButton>
          <TaskButton type="button" aria-label="Teams" $bg="#a5622b" $bar="#f5730a">{taskIcons.teams}</TaskButton>
        </TaskButtons>
        <Clock><span>2:18 PM</span><span>1/8/2020</span></Clock>
      </TaskBar>

      <Welcome>
        <TitleBar $height={30} $lead={9} $trail={0}>
          <LayoutLogo />
          <TitleText>Welcome to LayOut</TitleText>
          <ControlBox><Controls /></ControlBox>
        </TitleBar>
      </Welcome>

      <Tray>
        <TrayTitle>Default Tray<CloseBoxPlain type="button" aria-label="Close tray"><BoldX /></CloseBoxPlain></TrayTitle>
        <TrayBody>
          <Panels>
            <ColorsPanel />
            <TextStylePanel />
            <ModelPanel />
          </Panels>
          <Scroll size="422px" />
        </TrayBody>
      </Tray>
    </Screen>
  );
}
